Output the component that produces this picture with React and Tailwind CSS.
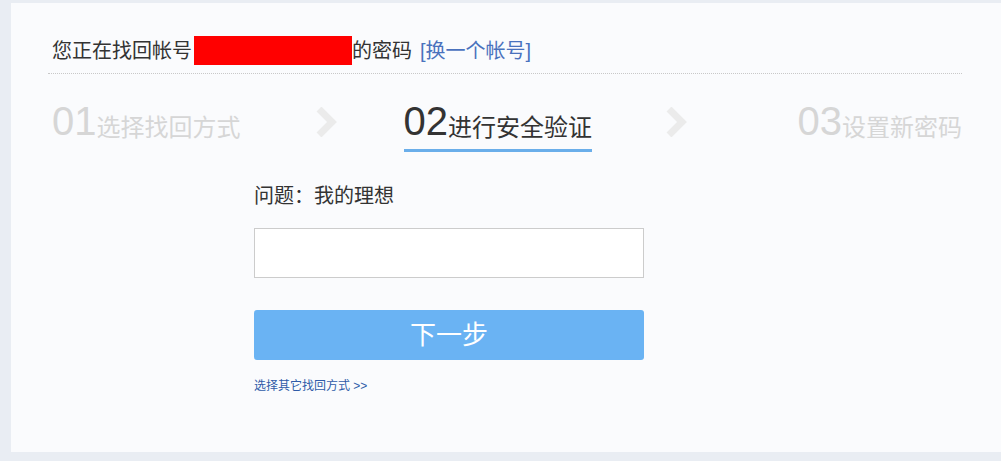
const font = { fontFamily: '"Liberation Sans", "Noto Sans CJK SC", sans-serif' };

function Chevron() {
    return (
        <svg width="22" height="30" viewBox="0 0 22 30" className="shrink-0">
            <polyline points="4,2 17,15 4,28" fill="none" stroke="#ebebeb" strokeWidth="7" />
        </svg>
    );
}

function Step({ num, label, active }) {
    return (
        <div className="flex flex-col">
            <div className={`flex items-end leading-none ${active ? 'text-[#333]' : 'text-[#d6d6d6]'}`}>
                <span className="text-[40px] leading-none">{num}</span>
                <span className="text-[24px] leading-none mb-[1px]">{label}</span>
            </div>
            <div className={`h-[3px] mt-[8px] ${active ? 'bg-[#6aaeea]' : 'bg-transparent'}`}></div>
        </div>
    );
}

export default function App() {
    return (
        <div className="w-[1001px] h-[461px] bg-[#e9edf3] pt-[3px] pl-[11px] overflow-hidden" style={font}>
            <div className="h-[449px] bg-[#fafbfd] pt-[33px]">
                {/* Account header */}
                <div className="ml-[37px] w-[914px] border-b border-dotted border-[#c8c8c8] pb-[8px] pl-[4px] flex items-center text-[20px] text-[#333] leading-none">
                    <span>您正在找回帐号</span>
                    <span className="inline-block w-[158px] h-[29px] ml-[2px] bg-[#ff0000]"></span>
                    <span>的密码</span>
                    <a href="#" className="ml-[8px] text-[#4a72bd]">[换一个帐号]</a>
                </div>

                {/* Steps */}
                <div className="ml-[41px] w-[910px] mt-[27px] flex items-start">
                    <Step num="01" label="选择找回方式" />
                    <div className="ml-[74px] mt-[6px]"><Chevron /></div>
                    <div className="ml-[67px]"><Step num="02" label="进行安全验证" active /></div>
                    <div className="ml-[73px] mt-[6px]"><Chevron /></div>
                    <div className="ml-auto"><Step num="03" label="设置新密码" /></div>
                </div>

                {/* Question form */}
                <div className="ml-[243px] w-[390px] mt-[34px]">
                    <p className="text-[20px] text-[#333] leading-none">问题：我的理想</p>
                    <input type="text" className="mt-[22px] block w-[390px] h-[50px] bg-white border border-[#cccccc] outline-none px-3 text-[16px]" />
                    <button className="mt-[32px] w-[390px] h-[50px] bg-[#6ab3f3] rounded-[3px] text-white text-[26px] leading-none">下一步</button>
                    <a href="#" className="block mt-[20px] text-[12px] text-[#2f5ba8] leading-none">选择其它找回方式 &gt;&gt;</a>
                </div>
            </div>
        </div>
    );
}
